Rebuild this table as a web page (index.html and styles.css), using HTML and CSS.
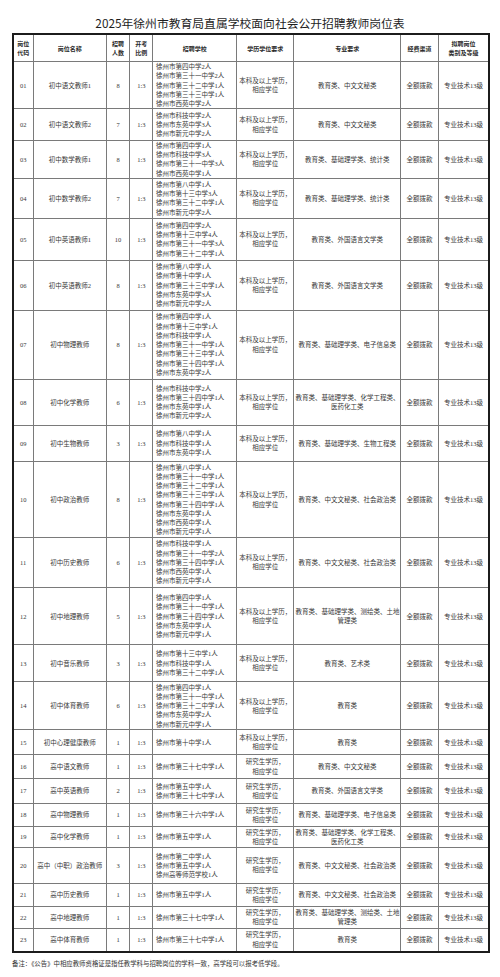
FILE: index.html
```html
<!DOCTYPE html>
<html lang="zh-CN">
<head>
<meta charset="utf-8">
<title>2025年徐州市教育局直属学校面向社会公开招聘教师岗位表</title>
<link rel="stylesheet" href="styles.css">
</head>
<body>
<h1 class="title">2025年徐州市教育局直属学校面向社会公开招聘教师岗位表</h1>
<table class="posts">
<colgroup>
<col class="c-code"><col class="c-name"><col class="c-num"><col class="c-ratio"><col class="c-school"><col class="c-edu"><col class="c-major"><col class="c-fund"><col class="c-level">
</colgroup>
<thead>
<tr>
<th>岗位<br>代码</th><th>岗位名称</th><th>招聘<br>人数</th><th>开考<br>比例</th><th>招聘学校</th><th>学历学位要求</th><th>专业要求</th><th>经费渠道</th><th>拟聘岗位<br>类别及等级</th>
</tr>
</thead>
<tbody>
<tr><td>01</td><td>初中语文教师1</td><td>8</td><td>1:3</td><td class="school">徐州市第四中学2人<br>徐州市第三十一中学2人<br>徐州市第三十二中学1人<br>徐州市第三十三中学1人<br>徐州市西苑中学2人</td><td>本科及以上学历，<br>相应学位</td><td>教育类、中文文秘类</td><td>全额拨款</td><td>专业技术13级</td></tr>
<tr><td>02</td><td>初中语文教师2</td><td>7</td><td>1:3</td><td class="school">徐州市科技中学2人<br>徐州市东苑中学3人<br>徐州市新元中学2人</td><td>本科及以上学历，<br>相应学位</td><td>教育类、中文文秘类</td><td>全额拨款</td><td>专业技术13级</td></tr>
<tr><td>03</td><td>初中数学教师1</td><td>8</td><td>1:3</td><td class="school">徐州市第四中学1人<br>徐州市科技中学3人<br>徐州市第三十一中学3人<br>徐州市西苑中学1人</td><td>本科及以上学历，<br>相应学位</td><td>教育类、基础理学类、统计类</td><td>全额拨款</td><td>专业技术13级</td></tr>
<tr><td>04</td><td>初中数学教师2</td><td>7</td><td>1:3</td><td class="school">徐州市第八中学1人<br>徐州市第十三中学3人<br>徐州市第三十二中学1人<br>徐州市新元中学2人</td><td>本科及以上学历，<br>相应学位</td><td>教育类、基础理学类、统计类</td><td>全额拨款</td><td>专业技术13级</td></tr>
<tr><td>05</td><td>初中英语教师1</td><td>10</td><td>1:3</td><td class="school">徐州市第四中学2人<br>徐州市第十三中学4人<br>徐州市第三十一中学3人<br>徐州市第三十二中学1人</td><td>本科及以上学历，<br>相应学位</td><td>教育类、外国语言文学类</td><td>全额拨款</td><td>专业技术13级</td></tr>
<tr><td>06</td><td>初中英语教师2</td><td>8</td><td>1:3</td><td class="school">徐州市第八中学1人<br>徐州市第十中学1人<br>徐州市第三十三中学1人<br>徐州市东苑中学3人<br>徐州市新元中学2人</td><td>本科及以上学历，<br>相应学位</td><td>教育类、外国语言文学类</td><td>全额拨款</td><td>专业技术13级</td></tr>
<tr><td>07</td><td>初中物理教师</td><td>8</td><td>1:3</td><td class="school">徐州市第四中学1人<br>徐州市第十三中学1人<br>徐州市科技中学1人<br>徐州市第三十一中学1人<br>徐州市第三十三中学1人<br>徐州市第三十四中学1人<br>徐州市东苑中学2人</td><td>本科及以上学历，<br>相应学位</td><td>教育类、基础理学类、电子信息类</td><td>全额拨款</td><td>专业技术13级</td></tr>
<tr><td>08</td><td>初中化学教师</td><td>6</td><td>1:3</td><td class="school">徐州市科技中学2人<br>徐州市第三十四中学1人<br>徐州市东苑中学1人<br>徐州市新元中学2人</td><td>本科及以上学历，<br>相应学位</td><td>教育类、基础理学类、化学工程类、<br>医药化工类</td><td>全额拨款</td><td>专业技术13级</td></tr>
<tr><td>09</td><td>初中生物教师</td><td>3</td><td>1:3</td><td class="school">徐州市第八中学1人<br>徐州市科技中学1人<br>徐州市东苑中学1人</td><td>本科及以上学历，<br>相应学位</td><td>教育类、基础理学类、生物工程类</td><td>全额拨款</td><td>专业技术13级</td></tr>
<tr><td>10</td><td>初中政治教师</td><td>8</td><td>1:3</td><td class="school">徐州市第八中学1人<br>徐州市第三十一中学1人<br>徐州市第三十二中学1人<br>徐州市第三十三中学1人<br>徐州市第三十四中学1人<br>徐州市东苑中学1人<br>徐州市西苑中学1人<br>徐州市新元中学1人</td><td>本科及以上学历，<br>相应学位</td><td>教育类、中文文秘类、社会政治类</td><td>全额拨款</td><td>专业技术13级</td></tr>
<tr><td>11</td><td>初中历史教师</td><td>6</td><td>1:3</td><td class="school">徐州市科技中学1人<br>徐州市第三十一中学2人<br>徐州市第三十四中学1人<br>徐州市西苑中学1人<br>徐州市新元中学1人</td><td>本科及以上学历，<br>相应学位</td><td>教育类、中文文秘类、社会政治类</td><td>全额拨款</td><td>专业技术13级</td></tr>
<tr><td>12</td><td>初中地理教师</td><td>5</td><td>1:3</td><td class="school">徐州市第四中学1人<br>徐州市第三十一中学1人<br>徐州市第三十四中学1人<br>徐州市东苑中学1人<br>徐州市新元中学1人</td><td>本科及以上学历，<br>相应学位</td><td>教育类、基础理学类、测绘类、土地<br>管理类</td><td>全额拨款</td><td>专业技术13级</td></tr>
<tr><td>13</td><td>初中音乐教师</td><td>3</td><td>1:3</td><td class="school">徐州市第十三中学1人<br>徐州市科技中学1人<br>徐州市第三十二中学1人</td><td>本科及以上学历，<br>相应学位</td><td>教育类、艺术类</td><td>全额拨款</td><td>专业技术13级</td></tr>
<tr><td>14</td><td>初中体育教师</td><td>6</td><td>1:3</td><td class="school">徐州市第四中学1人<br>徐州市第三十一中学1人<br>徐州市第三十二中学1人<br>徐州市东苑中学2人<br>徐州市新元中学1人</td><td>本科及以上学历，<br>相应学位</td><td>教育类</td><td>全额拨款</td><td>专业技术13级</td></tr>
<tr><td>15</td><td>初中心理健康教师</td><td>1</td><td>1:3</td><td class="school">徐州市第十中学1人</td><td>本科及以上学历，<br>相应学位</td><td>教育类</td><td>全额拨款</td><td>专业技术13级</td></tr>
<tr><td>16</td><td>高中语文教师</td><td>1</td><td>1:3</td><td class="school">徐州市第三十七中学1人</td><td>研究生学历，<br>相应学位</td><td>教育类、中文文秘类</td><td>全额拨款</td><td>专业技术13级</td></tr>
<tr><td>17</td><td>高中英语教师</td><td>2</td><td>1:3</td><td class="school">徐州市第五中学1人<br>徐州市第三十七中学1人</td><td>研究生学历，<br>相应学位</td><td>教育类、外国语言文学类</td><td>全额拨款</td><td>专业技术13级</td></tr>
<tr><td>18</td><td>高中物理教师</td><td>1</td><td>1:3</td><td class="school">徐州市第三十六中学1人</td><td>研究生学历，<br>相应学位</td><td>教育类、基础理学类、电子信息类</td><td>全额拨款</td><td>专业技术13级</td></tr>
<tr><td>19</td><td>高中化学教师</td><td>1</td><td>1:3</td><td class="school">徐州市第五中学1人</td><td>研究生学历，<br>相应学位</td><td>教育类、基础理学类、化学工程类、<br>医药化工类</td><td>全额拨款</td><td>专业技术13级</td></tr>
<tr><td>20</td><td>高中（中职）政治教师</td><td>3</td><td>1:3</td><td class="school">徐州市第二中学1人<br>徐州市第五中学1人<br>徐州高等师范学校1人</td><td>研究生学历，<br>相应学位</td><td>教育类、中文文秘类、社会政治类</td><td>全额拨款</td><td>专业技术13级</td></tr>
<tr><td>21</td><td>高中历史教师</td><td>1</td><td>1:3</td><td class="school">徐州市第五中学1人</td><td>研究生学历，<br>相应学位</td><td>教育类、中文文秘类、社会政治类</td><td>全额拨款</td><td>专业技术13级</td></tr>
<tr><td>22</td><td>高中地理教师</td><td>1</td><td>1:3</td><td class="school">徐州市第三十七中学1人</td><td>研究生学历，<br>相应学位</td><td>教育类、基础理学类、测绘类、土地<br>管理类</td><td>全额拨款</td><td>专业技术13级</td></tr>
<tr><td>23</td><td>高中体育教师</td><td>1</td><td>1:3</td><td class="school">徐州市第三十七中学1人</td><td>研究生学历，<br>相应学位</td><td>教育类</td><td>全额拨款</td><td>专业技术13级</td></tr>
</tbody>
</table>
<p class="note">备注：《公告》中相应教师资格证是指任教学科与招聘岗位的学科一致，高学段可以报考低学段。</p>
</body>
</html>
```
FILE: styles.css
```css
html, body {
  margin: 0;
  padding: 0;
  background: #ffffff;
}

body {
  width: 500px;
  color: #333333;
  font-family: "Liberation Serif", "Noto Sans CJK SC", serif;
}

.title {
  margin: 0 0 3px 0;
  padding-top: 16px;
  font-family: "Noto Sans CJK SC", sans-serif;
  font-weight: 400;
  font-size: 11.8px;
  line-height: 14px;
  color: #1e1e1e;
  text-align: center;
}

.posts {
  margin-left: 12px;
  width: 476px;
  table-layout: fixed;
  border-collapse: collapse;
  border: 2px solid #1c1c1c;
  border-right-width: 2.5px;
  font-size: 6.5px;
  line-height: 9.25px;
}

.c-code { width: 20px; }
.c-name { width: 73.6px; }
.c-num { width: 23px; }
.c-ratio { width: 23.4px; }
.c-school { width: 83.6px; }
.c-edu { width: 57.4px; }
.c-major { width: 106.6px; }
.c-fund { width: 38px; }
.c-level { width: 50.4px; }

.posts th,
.posts td {
  border: 1px solid #7a7a7a;
  padding: 0 1px;
  text-align: center;
  vertical-align: middle;
  white-space: nowrap;
  overflow: hidden;
}

.posts th {
  height: 26px;
  font-family: "Noto Sans CJK SC", sans-serif;
  font-weight: 700;
  font-size: 6px;
  line-height: 9px;
  color: #2a2a2a;
}

.posts td {
  color: #383838;
}

.posts td.school {
  text-align: left;
  padding-left: 2.5px;
}

.posts tbody tr:nth-child(1) { height: 46.7px; }
.posts tbody tr:nth-child(2) { height: 31.6px; }
.posts tbody tr:nth-child(3) { height: 36.7px; }
.posts tbody tr:nth-child(4) { height: 40px; }
.posts tbody tr:nth-child(5) { height: 42.3px; }
.posts tbody tr:nth-child(6) { height: 49.4px; }
.posts tbody tr:nth-child(7) { height: 69.3px; }
.posts tbody tr:nth-child(8) { height: 45.7px; }
.posts tbody tr:nth-child(9) { height: 36.6px; }
.posts tbody tr:nth-child(10) { height: 76px; }
.posts tbody tr:nth-child(11) { height: 49.7px; }
.posts tbody tr:nth-child(12) { height: 57.7px; }
.posts tbody tr:nth-child(13) { height: 36.6px; }
.posts tbody tr:nth-child(14) { height: 48.4px; }
.posts tbody tr:nth-child(15) { height: 25px; }
.posts tbody tr:nth-child(16) { height: 23.3px; }
.posts tbody tr:nth-child(17) { height: 25px; }
.posts tbody tr:nth-child(18) { height: 23.3px; }
.posts tbody tr:nth-child(19) { height: 21px; }
.posts tbody tr:nth-child(20) { height: 35.7px; }
.posts tbody tr:nth-child(21) { height: 23.3px; }
.posts tbody tr:nth-child(22) { height: 21.7px; }
.posts tbody tr:nth-child(23) { height: 23.3px; }

.note {
  margin: 6px 0 0 12px;
  font-family: "Noto Sans CJK SC", sans-serif;
  font-size: 6.4px;
  line-height: 9px;
  color: #333333;
}
```
